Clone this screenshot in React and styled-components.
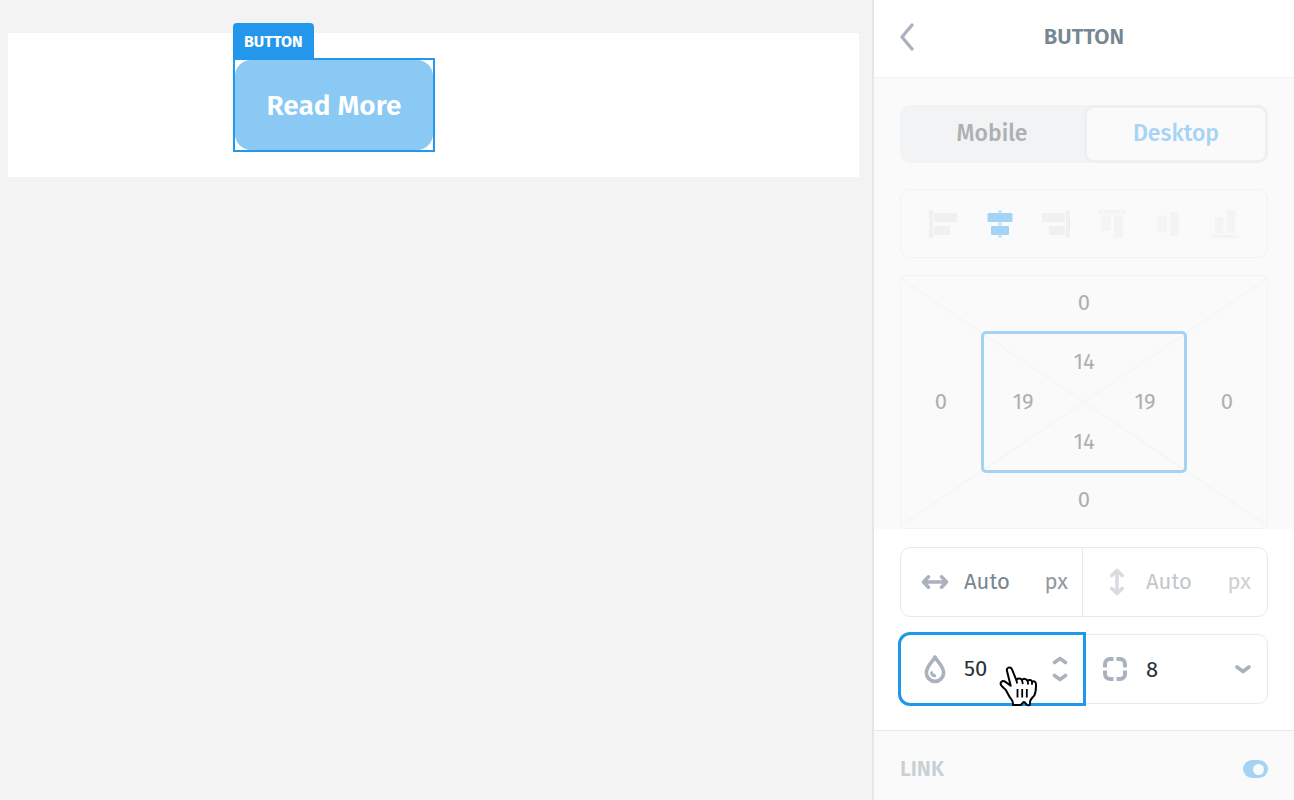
import React, { useState } from "react";
import styled, { createGlobalStyle } from "styled-components";

const GlobalStyle = createGlobalStyle`
  *, *::before, *::after { box-sizing: border-box; }
  body {
    margin: 0;
    background: #f3f3f3;
    font-family: "Fira Sans", "Noto Sans", "Open Sans", sans-serif;
  }
  button, input, select { font: inherit; color: inherit; }
`;

const Page = styled.div`
  display: flex;
  min-height: 100vh;
`;

const Canvas = styled.main`
  flex: 1;
  min-width: 0;
  padding: 33px 13px 0 8px;
`;

const Block = styled.div`
  background: #fff;
  padding: 25px 0 25px 225px;
`;

const Selection = styled.div`
  position: relative;
  width: 202px;
  border: 2px solid #2397ec;
`;

const Tag = styled.span`
  position: absolute;
  left: -2px;
  bottom: 100%;
  padding: 0 11px;
  border-radius: 4px 4px 0 0;
  background: #2397ec;
  color: #fff;
  font-size: 16px;
  font-weight: 700;
  line-height: 37px;
`;

const ReadMore = styled.button`
  display: block;
  width: 100%;
  height: 90px;
  padding: 0;
  border: 0;
  border-radius: 16px;
  background: #8ac9f3;
  color: #fff;
  font-size: 28px;
  font-weight: 600;
`;

const Sidebar = styled.aside`
  flex: 0 0 422px;
  display: flex;
  flex-direction: column;
  border-left: 2px solid #e6e6e6;
  background: #fff;
`;

const Header = styled.header`
  display: grid;
  grid-template-columns: 26px 1fr 26px;
  align-items: center;
  height: 78px;
  padding: 0 20px 4px;
  border-bottom: 1px solid #f0f1f2;
`;

const BackButton = styled.button`
  display: flex;
  justify-content: center;
  padding: 0;
  border: 0;
  background: none;
`;

const Title = styled.h1`
  margin: 0;
  color: #778791;
  font-size: 22px;
  font-weight: 600;
  line-height: 28px;
  text-align: center;
`;

const DimmedSection = styled.section`
  display: flex;
  flex-direction: column;
  padding: 27px 26px 0;
  background: #fafafa;
`;

const Segmented = styled.div`
  display: grid;
  grid-template-columns: 1fr 1fr;
  height: 58px;
  margin-bottom: 26px;
  border-radius: 10px;
  background: #f1f3f5;
`;

const Segment = styled.button`
  padding: 0 0 2px;
  border: ${(p) => (p.$active ? "3px solid #eeeff0" : "3px solid transparent")};
  border-radius: 10px;
  background: ${(p) => (p.$active ? "#fafafa" : "transparent")};
  color: ${(p) => (p.$active ? "#a5d4f4" : "#adb0b2")};
  font-size: 23px;
  font-weight: 500;
`;

const AlignBar = styled.div`
  display: flex;
  align-items: center;
  justify-content: space-between;
  height: 69px;
  margin-bottom: 17px;
  padding: 0 28px;
  border: 1px solid #f2f3f4;
  border-radius: 10px;
`;

const AlignButton = styled.button`
  display: flex;
  padding: 0;
  border: 0;
  background: none;
  color: ${(p) => (p.$active ? "#a4d4f3" : p.$faint ? "#f4f4f5" : "#eff0f1")};
`;

const BoxModel = styled.div`
  position: relative;
  display: grid;
  grid-template: 55px 142px 55px / 80px 1fr 80px;
  border: 1px solid #f2f3f4;
  border-radius: 5px;
`;

const Diagonals = styled.svg`
  position: absolute;
  inset: 0;
  width: 100%;
  height: 100%;
`;

const Padding = styled.div`
  position: relative;
  grid-area: 2 / 2;
  display: grid;
  grid-template: 40px 40px 40px / 78px 1fr 78px;
  align-content: center;
  border: 3px solid #a4d4f3;
  border-radius: 5px;
`;

const cells = {
  top: "1 / 2",
  left: "2 / 1",
  right: "2 / 3",
  bottom: "3 / 2",
};

const SideInput = styled.input`
  position: relative;
  grid-area: ${(p) => cells[p.$side]};
  place-self: center;
  width: 40px;
  height: 30px;
  padding: 0 0 2px;
  border: 0;
  background: none;
  color: #adb0b2;
  font-size: 22px;
  text-align: center;
  outline: 0;
`;

const Fields = styled.section`
  display: grid;
  gap: 17px;
  padding: 18px 26px 26px;
`;

const FieldRow = styled.div`
  display: grid;
  grid-template-columns: 182px 1fr;
  height: 70px;
  border: 1px solid #e8eaee;
  border-radius: 10px;
`;

const Field = styled.div`
  position: relative;
  display: flex;
  align-items: center;
  gap: 15px;
  min-width: 0;
  padding: 0 16px 0 20px;
  color: ${(p) => (p.$dark ? "#263238" : "#778791")};
  opacity: ${(p) => (p.$disabled ? 0.45 : 1)};
  font-size: 22px;
`;

const Divided = styled(Field)`
  padding-right: 14px;
  border-right: 1px solid #e8eaee;
`;

const FocusedField = styled(Field)`
  margin: -3px -3px -3px -3px;
  padding: 0 15px 0 20px;
  border: 3px solid #1e98ea;
  border-radius: 12px 0 0 12px;
`;

const FieldIcon = styled.label`
  flex: 0 0 28px;
  display: flex;
  justify-content: ${(p) => (p.$start ? "flex-start" : "center")};
`;

const FieldInput = styled.input`
  flex: 1;
  min-width: 0;
  width: 0;
  height: 32px;
  padding: 0 0 2px;
  border: 0;
  background: none;
  outline: 0;
`;

const Unit = styled.span`
  padding-bottom: 2px;
  color: #93999d;
`;

const Stepper = styled.div`
  display: flex;
  flex-direction: column;
  gap: 8px;
`;

const StepButton = styled.button`
  display: flex;
  padding: 0;
  border: 0;
  background: none;
`;

const RadiusSelect = styled.select`
  flex: 1;
  height: 40px;
  min-width: 0;
  padding: 0;
  border: 0;
  appearance: none;
  background: none;
  outline: 0;
`;

const SelectArrow = styled.svg`
  pointer-events: none;
`;

const Pointer = styled.svg`
  position: absolute;
  left: 98px;
  top: 31px;
  pointer-events: none;
`;

const LinkSection = styled.section`
  flex: 1;
  display: flex;
  align-items: flex-start;
  justify-content: space-between;
  padding: 24px 26px 0;
  border-top: 1px solid #e6e8ee;
  background: #fafafa;
`;

const LinkLabel = styled.label`
  color: #c9d0d4;
  font-size: 21px;
  font-weight: 600;
  line-height: 28px;
`;

const Toggle = styled.input`
  display: flex;
  align-items: center;
  justify-content: flex-end;
  appearance: none;
  width: 25px;
  height: 18px;
  margin: 5px 0;
  padding: 0 4px;
  border-radius: 9px;
  background: #a4d4f3;

  &::after {
    content: "";
    width: 11px;
    height: 11px;
    border-radius: 50%;
    background: #fafafa;
  }
  &:not(:checked) {
    justify-content: flex-start;
    background: #d8dde1;
  }
`;

const alignments = [
  {
    name: "Align left",
    bars: [[0, 0, 4, 28]],
    blocks: [[5, 3, 23, 9], [5, 16, 16, 9]],
  },
  {
    name: "Align center",
    active: true,
    bars: [[13, 0, 4, 28]],
    blocks: [[2.5, 3, 25, 9], [6, 16, 18, 9]],
  },
  {
    name: "Align right",
    bars: [[24, 0, 4, 28]],
    blocks: [[0, 3, 23, 9], [7, 16, 16, 9]],
  },
  {
    name: "Align top",
    faint: true,
    bars: [[0, 0, 28, 4]],
    blocks: [[3.5, 5, 9, 16], [16, 5, 9, 23]],
  },
  {
    name: "Align middle",
    faint: true,
    bars: [[0, 12, 26, 4]],
    blocks: [[2.5, 5.5, 9, 17], [15, 2, 9, 24]],
  },
  {
    name: "Align bottom",
    faint: true,
    bars: [[0, 24.5, 28, 3.5]],
    blocks: [[3.5, 7, 9, 16], [15.5, 0, 9, 23]],
  },
];

function AlignIcon({ bars, blocks, active, name }) {
  const soft = active || name === "Align middle";
  return (
    <svg width="28" height="28" viewBox="0 0 28 28" fill="currentColor">
      {bars.map(([x, y, w, h]) => (
        <rect key="bar" x={x} y={y} width={w} height={h} opacity={soft ? 0.5 : 1} />
      ))}
      {blocks.map(([x, y, w, h], i) => (
        <rect key={i} x={x} y={y} width={w} height={h} rx="1" />
      ))}
    </svg>
  );
}

const iconStroke = {
  fill: "none",
  stroke: "#aab3bd",
  strokeWidth: 3.6,
  strokeLinecap: "round",
  strokeLinejoin: "round",
};

function Side({ side, label, value }) {
  return <SideInput $side={side} aria-label={label} defaultValue={value} />;
}

export default function App() {
  const [device, setDevice] = useState("Desktop");
  const [link, setLink] = useState(true);

  return (
    <Page>
      <GlobalStyle />
      <Canvas>
        <Block>
          <Selection>
            <Tag>BUTTON</Tag>
            <ReadMore type="button">Read More</ReadMore>
          </Selection>
        </Block>
      </Canvas>

      <Sidebar>
        <Header>
          <BackButton type="button" aria-label="Back">
            <svg width="16" height="28" viewBox="0 0 16 28" {...iconStroke} strokeWidth="3.4">
              <path d="M13 2 3 14l10 12" />
            </svg>
          </BackButton>
          <Title>BUTTON</Title>
        </Header>

        <DimmedSection>
          <Segmented>
            {["Mobile", "Desktop"].map((name) => (
              <Segment
                key={name}
                type="button"
                $active={device === name}
                onClick={() => setDevice(name)}
              >
                {name}
              </Segment>
            ))}
          </Segmented>

          <AlignBar>
            {alignments.map((a) => (
              <AlignButton
                key={a.name}
                type="button"
                aria-label={a.name}
                $active={a.active}
                $faint={a.faint}
              >
                <AlignIcon {...a} />
              </AlignButton>
            ))}
          </AlignBar>

          <BoxModel>
            <Diagonals
              viewBox="0 0 100 100"
              preserveAspectRatio="none"
              stroke="#f6f6f7"
              strokeWidth="2"
            >
              <path d="M0 1 100 99M100 1 0 99" vectorEffect="non-scaling-stroke" />
            </Diagonals>
            <Side side="top" label="Margin top" value="0" />
            <Side side="left" label="Margin left" value="0" />
            <Side side="right" label="Margin right" value="0" />
            <Side side="bottom" label="Margin bottom" value="0" />
            <Padding>
              <Side side="top" label="Padding top" value="14" />
              <Side side="left" label="Padding left" value="19" />
              <Side side="right" label="Padding right" value="19" />
              <Side side="bottom" label="Padding bottom" value="14" />
            </Padding>
          </BoxModel>
        </DimmedSection>

        <Fields>
          <FieldRow>
            <Divided>
              <FieldIcon htmlFor="width" aria-label="Width">
                <svg width="28" height="28" viewBox="0 0 28 28" {...iconStroke}>
                  <path d="M3 14h22M7.500 8.800 2.500 14l5 5.200M20.500 8.800l5 5.200-5 5.200" />
                </svg>
              </FieldIcon>
              <FieldInput id="width" defaultValue="Auto" />
              <Unit>px</Unit>
            </Divided>
            <Field $disabled>
              <FieldIcon htmlFor="height" aria-label="Height">
                <svg width="28" height="28" viewBox="0 0 28 28" {...iconStroke}>
                  <path d="M14 3v22M8.800 7.500 14 2.500l5.200 5M8.800 20.500l5.200 5 5.200-5" />
                </svg>
              </FieldIcon>
              <FieldInput id="height" defaultValue="Auto" disabled />
              <Unit>px</Unit>
            </Field>
          </FieldRow>

          <FieldRow>
            <FocusedField $dark>
              <FieldIcon htmlFor="opacity" aria-label="Opacity">
                <svg width="24" height="30" viewBox="0 0 24 30" {...iconStroke}>
                  <path d="M12 3C10.500 7 3.400 12 3.400 18.800a8.600 8.600 0 0 0 17.200 0C20.600 12 13.500 7 12 3Z" />
                  <path d="M8.600 18.800c.2 1.700 1.400 2.800 3.200 3" strokeWidth="3" />
                </svg>
              </FieldIcon>
              <FieldInput id="opacity" inputMode="numeric" defaultValue="50" />
              <Stepper>
                <StepButton type="button" aria-label="Increase">
                  <svg width="16" height="9" viewBox="0 0 16 9" {...iconStroke}>
                    <path d="m2.500 6.500 5.500-4 5.500 4" />
                  </svg>
                </StepButton>
                <StepButton type="button" aria-label="Decrease">
                  <svg width="16" height="9" viewBox="0 0 16 9" {...iconStroke}>
                    <path d="m2.500 2.500 5.500 4 5.500-4" />
                  </svg>
                </StepButton>
              </Stepper>
              <Pointer width="39" height="41" viewBox="0 0 39 41">
                <path
                  d="M8 5C7 1.500 11.500 0 13 3.300L17.300 14c1.200-2.200 4.500-2 5.700 0 1.200-1.700 4.500-1.500 5.600.8 1.400-1.500 3.900-1 4.400 1 2.500-1.300 4 .2 4 2.700 0 3.500.2 7-1.600 10.700-1.500 2.300-3.600 3.300-4.200 5.800l-.4 3.800c-1.200.6-2.300.5-3.200-.2l-1.800-2.200c-.7-.5-1.300-.4-1.800.2L21.800 39H14c.2-2.500-.2-4-1.600-5.600-2.200-2.500-3.700-6.400-5.600-9.400-1.300-1.700-3.600-3-4.600-4.800-1.800-3 1.200-5.300 3.900-3.600l5.600 4.200Z"
                  fill="#fff"
                  stroke="#000"
                  strokeWidth="2"
                  strokeLinejoin="round"
                />
                <path
                  d="m17.300 14 .9 3.500M23 14l.8 4M28.600 14.800l.6 3.700M33 15.800v3M18.500 23v8.500M23.200 23v8.500M27.800 23v8.500"
                  fill="none"
                  stroke="#000"
                  strokeWidth="1.800"
                />
              </Pointer>
            </FocusedField>
            <Field $dark>
              <FieldIcon $start htmlFor="radius" aria-label="Corner radius">
                <svg width="24" height="24" viewBox="2 2 24 24" {...iconStroke} strokeWidth="4" strokeLinecap="butt">
                  <path d="M12.500 4H9a5 5 0 0 0-5 5v3.500M15.500 4H19a5 5 0 0 1 5 5v3.500M4 15.500V19a5 5 0 0 0 5 5h3.500M24 15.500V19a5 5 0 0 1-5 5h-3.500" />
                </svg>
              </FieldIcon>
              <RadiusSelect id="radius" defaultValue="8">
                <option>0</option>
                <option>4</option>
                <option>8</option>
                <option>16</option>
              </RadiusSelect>
              <SelectArrow width="16" height="10" viewBox="0 0 16 10" {...iconStroke}>
                <path d="m2 3 6 4.500L14 3" />
              </SelectArrow>
            </Field>
          </FieldRow>
        </Fields>

        <LinkSection>
          <LinkLabel htmlFor="link">LINK</LinkLabel>
          <Toggle
            id="link"
            type="checkbox"
            checked={link}
            onChange={(e) => setLink(e.target.checked)}
          />
        </LinkSection>
      </Sidebar>
    </Page>
  );
}
